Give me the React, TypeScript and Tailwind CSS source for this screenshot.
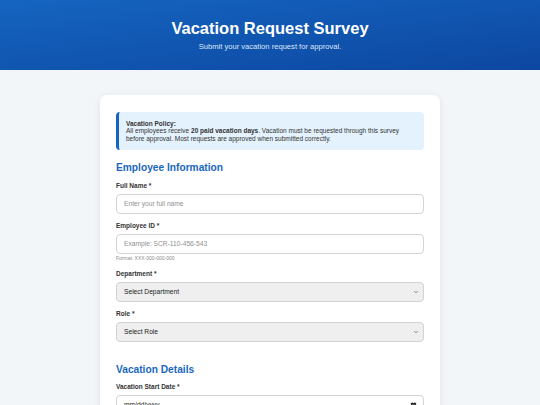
import { ChevronDown } from "lucide-react";

const font = { fontFamily: '"Liberation Sans", Arial, sans-serif' };

function Label({ text }: { text: string }) {
  return (
    <label className="block text-[6.5px] leading-[8px] font-bold text-[#333] mb-[4px]">
      {text}
    </label>
  );
}

function TextField({ label, placeholder, hint }: { label: string; placeholder: string; hint?: string }) {
  return (
    <div className="mb-[8px]">
      <Label text={label} />
      <div className="h-[20px] rounded-[4px] border border-[#d4d4d4] bg-white flex items-center px-[7px] text-[6.67px] text-[#919191]">
        {placeholder}
      </div>
      {hint && <div className="mt-[1.5px] text-[5px] leading-[7px] text-[#8a8a8a]">{hint}</div>}
    </div>
  );
}

function SelectField({ label, value }: { label: string; value: string }) {
  return (
    <div className="mb-[8px]">
      <Label text={label} />
      <div className="h-[20px] rounded-[4px] border border-[#d2d2d2] bg-[#efefef] flex items-center justify-between pl-[7px] pr-[4px] text-[6.67px] text-[#222]">
        <span>{value}</span>
        <ChevronDown size={6} strokeWidth={2.5} className="text-[#444]" />
      </div>
    </div>
  );
}

export default function App() {
  return (
    <div className="min-h-screen bg-[#f3f6f9]" style={font}>
      {/* Header */}
      <header className="h-[70px] bg-gradient-to-br from-[#1565c0] to-[#0d47a1] flex flex-col items-center justify-center text-white">
        <h1 className="text-[16.5px] leading-[19px] font-bold">Vacation Request Survey</h1>
        <p className="mt-[4px] text-[7.6px] leading-[9px] text-[#dbe7f6]">Submit your vacation request for approval.</p>
      </header>

      {/* Form card */}
      <div className="w-[340px] mx-auto mt-[25px] bg-white rounded-[7px] shadow-[0_1px_8px_rgba(0,0,0,0.07)] px-[16px] pt-[17px] pb-[16px]">
        <div className="bg-[#e3f2fd] border-l-[3px] border-[#1565c0] rounded-[4px] py-[8px] pl-[7px] pr-[8px] text-[6.5px] leading-[7.3px] text-[#333]">
          <div className="font-bold">Vacation Policy:</div>
          <p>
            All employees receive <b>20 paid vacation days</b>. Vacation must be requested through this survey before
            approval. Most requests are approved when submitted correctly.
          </p>
        </div>

        <h2 className="mt-[11.5px] mb-[7.5px] text-[10.2px] leading-[13px] font-bold text-[#1a67bd]">Employee Information</h2>
        <TextField label="Full Name *" placeholder="Enter your full name" />
        <TextField label="Employee ID *" placeholder="Example: SCR-110-456-543" hint="Format: XXX-000-000-000" />
        <SelectField label="Department *" value="Select Department" />
        <SelectField label="Role *" value="Select Role" />

        <h2 className="mt-[20.5px] mb-[7.5px] text-[10.2px] leading-[13px] font-bold text-[#1a67bd]">Vacation Details</h2>
        <div className="mb-[8px]">
          <Label text="Vacation Start Date *" />
          <div className="h-[20px] rounded-[4px] border border-[#d4d4d4] bg-white flex items-center justify-between pl-[7px] pr-[6px] text-[6.67px] text-[#222]">
            <span>mm/dd/yyyy</span>
            <svg width="7" height="7" viewBox="0 0 16 16" fill="#222">
              <path d="M2 2h12v12H2z M3.5 6v6.5h9V6z" fillRule="evenodd" />
              <rect x="4" y="0.5" width="1.6" height="3" />
              <rect x="10.4" y="0.5" width="1.6" height="3" />
            </svg>
          </div>
        </div>
      </div>
    </div>
  );
}
